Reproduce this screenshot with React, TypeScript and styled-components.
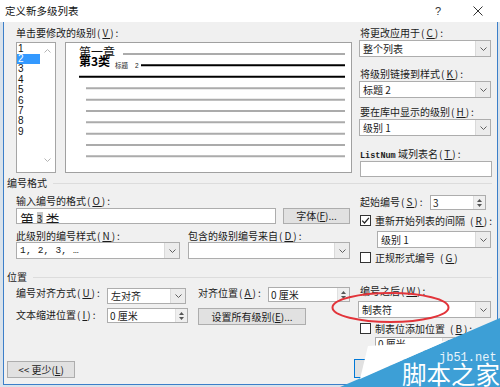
import React from "react";
import styled, { createGlobalStyle } from "styled-components";

const GlobalStyle = createGlobalStyle`
  html, body { margin: 0; padding: 0; }
  body {
    width: 500px;
    height: 387px;
    overflow: hidden;
    font-family: "Noto Sans CJK SC", "Noto Sans", sans-serif;
    color: #1b1b1b;
  }
  #root { width: 500px; height: 387px; }
`;

const Frame = styled.div`
  position: relative;
  width: 500px;
  height: 387px;
  display: flex;
  flex-direction: column;
  overflow: hidden;
  background: #d9e2eb;
`;

const TitleBar = styled.div`
  flex: none;
  height: 22px;
  display: flex;
  align-items: center;
  padding: 0 2px 0 5px;
  background: #fff;
`;

const Title = styled.div`
  flex: 1;
  font-size: 10.5px;
  line-height: 12px;
  color: #111;
`;

const TitleButton = styled.div`
  width: 40px;
  height: 22px;
  display: flex;
  align-items: center;
  justify-content: center;
  font-family: "Liberation Sans", sans-serif;
  font-size: 11px;
  color: #333;
`;

const Body = styled.div`
  flex: 1;
  min-height: 0;
  margin: 0 2px 2px 3px;
  border: 1px solid #3c7fc9;
  border-top: none;
  background: #f0f0f0;
  display: flex;
  flex-direction: column;
  padding-left: 12px;
`;

const Section = styled.div<{ $pt?: number }>`
  flex: none;
  display: flex;
  gap: 8px;
  padding-top: ${(p) => p.$pt ?? 0}px;
`;

const Col = styled.div<{ $w: number }>`
  flex: none;
  width: ${(p) => p.$w}px;
  display: flex;
  flex-direction: column;
  align-items: flex-start;
`;

const Row = styled.div<{ $mt?: number; $ml?: number }>`
  flex: none;
  display: flex;
  align-items: flex-start;
  margin-top: ${(p) => p.$mt ?? 0}px;
  margin-left: ${(p) => p.$ml ?? 0}px;
`;

const Group = styled.div<{ $mt?: number }>`
  flex: none;
  display: flex;
  align-items: center;
  gap: 6px;
  height: 12px;
  margin: ${(p) => p.$mt ?? 0}px 5px 0 -9px;
  font-size: 10px;
  line-height: 12px;
  &::after {
    content: "";
    flex: 1;
    height: 1px;
    background: #dcdcdc;
  }
`;

const Label = styled.div<{ $mt?: number; $ml?: number; $w?: number }>`
  flex: none;
  height: 12px;
  font-size: 10px;
  line-height: 12px;
  white-space: nowrap;
  margin-top: ${(p) => p.$mt ?? 0}px;
  margin-left: ${(p) => p.$ml ?? 0}px;
  ${(p) => (p.$w ? `width: ${p.$w}px;` : "")}
`;

const MonoWord = styled.span`
  font-family: "Liberation Mono", monospace;
  font-size: 8.5px;
  font-weight: 700;
`;

const KeyWrap = styled.span`
  margin-left: 1px;
  letter-spacing: 2px;
  u {
    text-decoration: underline;
    text-underline-offset: 1px;
  }
`;

const Key = ({ k, tail = ":" }: { k: string; tail?: string }) => (
  <KeyWrap>
    (<u>{k}</u>){tail}
  </KeyWrap>
);

const Box = styled.div<{ $w: number; $h: number; $mt?: number; $ml?: number }>`
  flex: none;
  box-sizing: border-box;
  width: ${(p) => p.$w}px;
  height: ${(p) => p.$h}px;
  margin-top: ${(p) => p.$mt ?? 0}px;
  margin-left: ${(p) => p.$ml ?? 0}px;
  border: 1px solid #adadad;
  background: #fff;
  display: flex;
  align-items: stretch;
  overflow: hidden;
  font-size: 10px;
  line-height: 12px;
`;

const BoxText = styled.div<{ $mono?: boolean; $pl?: number }>`
  flex: 1;
  display: flex;
  align-items: center;
  padding-left: ${(p) => p.$pl ?? 3}px;
  white-space: nowrap;
  overflow: hidden;
  ${(p) =>
    p.$mono
      ? `font-family: "Liberation Mono", monospace; font-size: 9.5px; letter-spacing: 0.2px;`
      : ""}
`;

const ComboArrow = styled.div`
  flex: none;
  width: 14px;
  display: flex;
  align-items: center;
  justify-content: center;
  background: #ececec;
  border-left: 1px solid #dadada;
`;

const SpinArrows = styled.div`
  flex: none;
  width: 11px;
  display: flex;
  flex-direction: column;
  align-items: center;
  justify-content: center;
  gap: 2px;
  background: #efefef;
  border-left: 1px solid #e0e0e0;
`;

const BigText = styled.div`
  display: flex;
  align-items: flex-start;
  padding: 3px 0 0 3px;
  font-size: 14px;
  line-height: 14px;
  letter-spacing: 1.5px;
  white-space: nowrap;
`;

const Hilite = styled.span`
  display: inline-block;
  width: 6px;
  height: 12px;
  margin: 0 3px 0 1px;
  background: #c4c4c4;
  font-size: 10px;
  line-height: 14px;
  letter-spacing: 0;
  text-align: center;
`;

const Button = styled.div<{ $w: number; $h: number; $ml?: number; $mt?: number; $default?: boolean }>`
  flex: none;
  box-sizing: border-box;
  width: ${(p) => p.$w}px;
  height: ${(p) => p.$h}px;
  margin-left: ${(p) => p.$ml ?? 0}px;
  margin-top: ${(p) => p.$mt ?? 0}px;
  display: flex;
  align-items: center;
  justify-content: center;
  background: #e1e1e1;
  border: 1px solid ${(p) => (p.$default ? "#0078d7" : "#adadad")};
  font-size: 10px;
  line-height: 12px;
  white-space: nowrap;
  u {
    text-decoration: underline;
    text-underline-offset: 1px;
  }
`;

const CheckRow = styled.div<{ $mt?: number }>`
  flex: none;
  display: flex;
  align-items: center;
  gap: 4px;
  height: 13px;
  margin-top: ${(p) => p.$mt ?? 0}px;
  font-size: 10px;
  line-height: 12px;
  white-space: nowrap;
`;

const CheckBox = styled.div`
  flex: none;
  box-sizing: border-box;
  width: 11px;
  height: 11px;
  border: 1px solid #333;
  background: #fff;
  display: flex;
  align-items: center;
  justify-content: center;
`;

const ListBox = styled.div`
  flex: none;
  box-sizing: border-box;
  width: 40px;
  height: 131px;
  border: 1px solid #a5a5a5;
  background: #fff;
  display: flex;
`;

const ListItems = styled.div`
  width: 23px;
  padding-top: 0.6px;
  display: flex;
  flex-direction: column;
`;

const ListItem = styled.div<{ $sel?: boolean }>`
  height: 10.4px;
  line-height: 10.4px;
  padding-left: 1px;
  font-family: "Liberation Sans", sans-serif;
  font-size: 10px;
  background: ${(p) => (p.$sel ? "#3399ff" : "transparent")};
  color: ${(p) => (p.$sel ? "#fff" : "#111")};
`;

const ListScroll = styled.div`
  flex: 1;
  display: flex;
  flex-direction: column;
  align-items: center;
  justify-content: space-between;
  padding: 6px 0 10px;
`;

const Preview = styled.div`
  flex: none;
  box-sizing: border-box;
  width: 287px;
  height: 131px;
  margin-left: 9px;
  border: 1px solid #a0a0a0;
  background: #fff;
  svg {
    display: block;
  }
`;

const Footer = styled.div`
  margin-top: auto;
  display: flex;
  align-items: flex-end;
  padding-bottom: 6px;
`;

const Overlay = styled.svg`
  position: absolute;
  left: 0;
  top: 0;
  pointer-events: none;
`;

const Chevron = ({ up = false, color = "#5f5f5f" }: { up?: boolean; color?: string }) => (
  <svg width="7" height="4" viewBox="0 0 7 4">
    <path
      d={up ? "M0.5 3.5 L3.5 0.5 L6.5 3.5" : "M0.5 0.5 L3.5 3.5 L6.5 0.5"}
      fill="none"
      stroke={color}
      strokeWidth="1"
    />
  </svg>
);

const Tri = ({ up = false }: { up?: boolean }) => (
  <svg width="5" height="3" viewBox="0 0 5 3">
    <path d={up ? "M0 3 L2.5 0 L5 3 Z" : "M0 0 L2.5 3 L5 0 Z"} fill="#555" />
  </svg>
);

const Combo = ({
  w,
  h = 17,
  mt,
  ml,
  mono,
  children,
}: {
  w: number;
  h?: number;
  mt?: number;
  ml?: number;
  mono?: boolean;
  children?: React.ReactNode;
}) => (
  <Box $w={w} $h={h} $mt={mt} $ml={ml}>
    <BoxText $mono={mono}>{children}</BoxText>
    <ComboArrow>
      <Chevron />
    </ComboArrow>
  </Box>
);

const Spin = ({
  w,
  h = 15,
  mt,
  ml,
  children,
}: {
  w: number;
  h?: number;
  mt?: number;
  ml?: number;
  children?: React.ReactNode;
}) => (
  <Box $w={w} $h={h} $mt={mt} $ml={ml}>
    <BoxText $pl={2}>{children}</BoxText>
    <SpinArrows>
      <Tri up />
      <Tri />
    </SpinArrows>
  </Box>
);

const Check = ({ checked = false }: { checked?: boolean }) => (
  <CheckBox>
    {checked && (
      <svg width="9" height="9" viewBox="0 0 9 9">
        <path d="M1.2 4.6 L3.5 7 L7.9 1.8" fill="none" stroke="#222" strokeWidth="1.2" />
      </svg>
    )}
  </CheckBox>
);

const levels = [1, 2, 3, 4, 5, 6, 7, 8, 9];
const grayLines = [45.3, 56.7, 68, 79.3, 90.7, 102, 113.3];

export default function App() {
  return (
    <>
      <GlobalStyle />
      <Frame>
        <TitleBar>
          <Title>定义新多级列表</Title>
          <TitleButton>?</TitleButton>
          <TitleButton>
            <svg width="10" height="10" viewBox="0 0 10 10">
              <path d="M0.5 0.5 L9.5 9.5 M9.5 0.5 L0.5 9.5" stroke="#333" strokeWidth="1" />
            </svg>
          </TitleButton>
        </TitleBar>
        <Body>
          <Section $pt={5}>
            <Col $w={336}>
              <Label>
                单击要修改的级别<Key k="V" />
              </Label>
              <Row $mt={3}>
                <ListBox>
                  <ListItems>
                    {levels.map((n) => (
                      <ListItem key={n} $sel={n === 2}>
                        {n}
                      </ListItem>
                    ))}
                  </ListItems>
                  <ListScroll>
                    <Chevron up color="#b4b4b4" />
                    <Chevron color="#b4b4b4" />
                  </ListScroll>
                </ListBox>
                <Preview>
                  <svg width="285" height="129" viewBox="0 0 285 129">
                    <text x="13" y="13.5" fontSize="12" fontFamily="Noto Sans CJK SC" fill="#111">
                      第一章
                    </text>
                    <line x1="57" x2="279" y1="11" y2="11" stroke="#ababab" strokeWidth="2" />
                    <text x="13" y="23" fontSize="12" fontWeight="700" fontFamily="Noto Sans CJK SC" fill="#000">
                      第3类
                    </text>
                    <text x="49" y="24.7" fontSize="6.5" fontFamily="Noto Sans CJK SC" fill="#222">
                      标题
                    </text>
                    <text x="69" y="24.7" fontSize="6.5" fontFamily="Liberation Sans" fill="#222">
                      2
                    </text>
                    <line x1="75" x2="279" y1="22.3" y2="22.3" stroke="#000" strokeWidth="2" />
                    <line x1="13" x2="279" y1="33.7" y2="33.7" stroke="#000" strokeWidth="2" />
                    {grayLines.map((y) => (
                      <line key={y} x1="20" x2="279" y1={y} y2={y} stroke="#ababab" strokeWidth="2" />
                    ))}
                  </svg>
                </Preview>
              </Row>
            </Col>
            <Col $w={132}>
              <Label>
                将更改应用于<Key k="C" />
              </Label>
              <Combo w={132} mt={1} ml={-1}>
                整个列表
              </Combo>
              <Label $mt={11}>
                将级别链接到样式<Key k="K" />
              </Label>
              <Combo w={132} mt={1} ml={-1}>
                标题 2
              </Combo>
              <Label $mt={8}>
                要在库中显示的级别<Key k="H" />
              </Label>
              <Combo w={132} mt={1} ml={-1}>
                级别 1
              </Combo>
              <Label $mt={12}>
                <MonoWord>ListNum</MonoWord> 域列表名<Key k="T" />
              </Label>
              <Box $w={132} $h={16} $mt={1} />
            </Col>
          </Section>

          <Group>编号格式</Group>

          <Section>
            <Col $w={336}>
              <Label $mt={6}>
                输入编号的格式<Key k="O" />
              </Label>
              <Row $mt={1}>
                <Box $w={260} $h={16}>
                  <BigText>
                    第<Hilite>3</Hilite>类.
                  </BigText>
                </Box>
                <Button $w={67} $h={16} $ml={7}>
                  字体(<u>F</u>)...
                </Button>
              </Row>
              <Row $mt={6}>
                <Label $w={172}>
                  此级别的编号样式<Key k="N" />
                </Label>
                <Label>
                  包含的级别编号来自<Key k="D" />
                </Label>
              </Row>
              <Row>
                <Combo w={164} mono>
                  1, 2, 3, …
                </Combo>
                <Combo w={162} ml={8} />
              </Row>
            </Col>
            <Col $w={132}>
              <Row $mt={6}>
                <Label $w={70} $mt={1}>
                  起始编号<Key k="S" />
                </Label>
                <Spin w={56} h={15}>
                  3
                </Spin>
              </Row>
              <CheckRow $mt={4}>
                <Check checked />
                重新开始列表的间隔<Key k="R" />
              </CheckRow>
              <Combo w={114} mt={4} ml={17}>
                级别 1
              </Combo>
              <CheckRow $mt={3}>
                <Check />
                正规形式编号<Key k="G" tail="" />
              </CheckRow>
            </Col>
          </Section>

          <Group $mt={7}>位置</Group>

          <Section>
            <Col $w={336}>
              <Row $mt={5}>
                <Label $w={91} $mt={-1}>
                  编号对齐方式<Key k="U" />
                </Label>
                <Combo w={79} h={16}>
                  左对齐
                </Combo>
                <Label $w={70} $ml={12} $mt={-1}>
                  对齐位置<Key k="A" />
                </Label>
                <Spin w={82} h={15} mt={-1}>
                  0 厘米
                </Spin>
              </Row>
              <Row $mt={4}>
                <Label $w={91} $mt={1}>
                  文本缩进位置<Key k="I" />
                </Label>
                <Spin w={81} h={15}>
                  0 厘米
                </Spin>
                <Button $w={108} $h={17} $ml={10}>
                  设置所有级别(<u>E</u>)...
                </Button>
              </Row>
            </Col>
            <Col $w={132}>
              <Label $mt={2}>
                编号之后<Key k="W" />
              </Label>
              <Combo w={133} mt={4} ml={-2}>
                制表符
              </Combo>
              <CheckRow $mt={4}>
                <Check />
                制表位添加位置<Key k="B" />
              </CheckRow>
              <Spin w={80} h={14} mt={2} ml={15}>
                0 厘米
              </Spin>
            </Col>
          </Section>

          <Footer>
            <Button $w={68} $h={17} $ml={-9}>
              &lt;&lt; 更少(<u>L</u>)
            </Button>
            <Button $w={66} $h={19} $ml={279} $default>
              确定
            </Button>
            <Button $w={66} $h={19} $ml={8}>
              取消
            </Button>
          </Footer>
        </Body>

        <Overlay width="500" height="387" viewBox="0 0 500 387">
          <ellipse cx="390.5" cy="307.5" rx="58" ry="14.5" fill="none" stroke="#e2343a" strokeWidth="2" />
          <polygon points="500,318 500,387 340,387" fill="#3d9fd6" />
          <polygon points="446,341 368,346 360,379" fill="#ffffff" />
          <text x="439" y="361" fontFamily="Liberation Mono" fontSize="12" fill="#e8f4fb">
            jb51.net
          </text>
          <text x="402" y="384" fontFamily="Noto Sans CJK SC" fontSize="24.5" fill="#ffffff">
            脚本之家
          </text>
        </Overlay>
      </Frame>
    </>
  );
}
